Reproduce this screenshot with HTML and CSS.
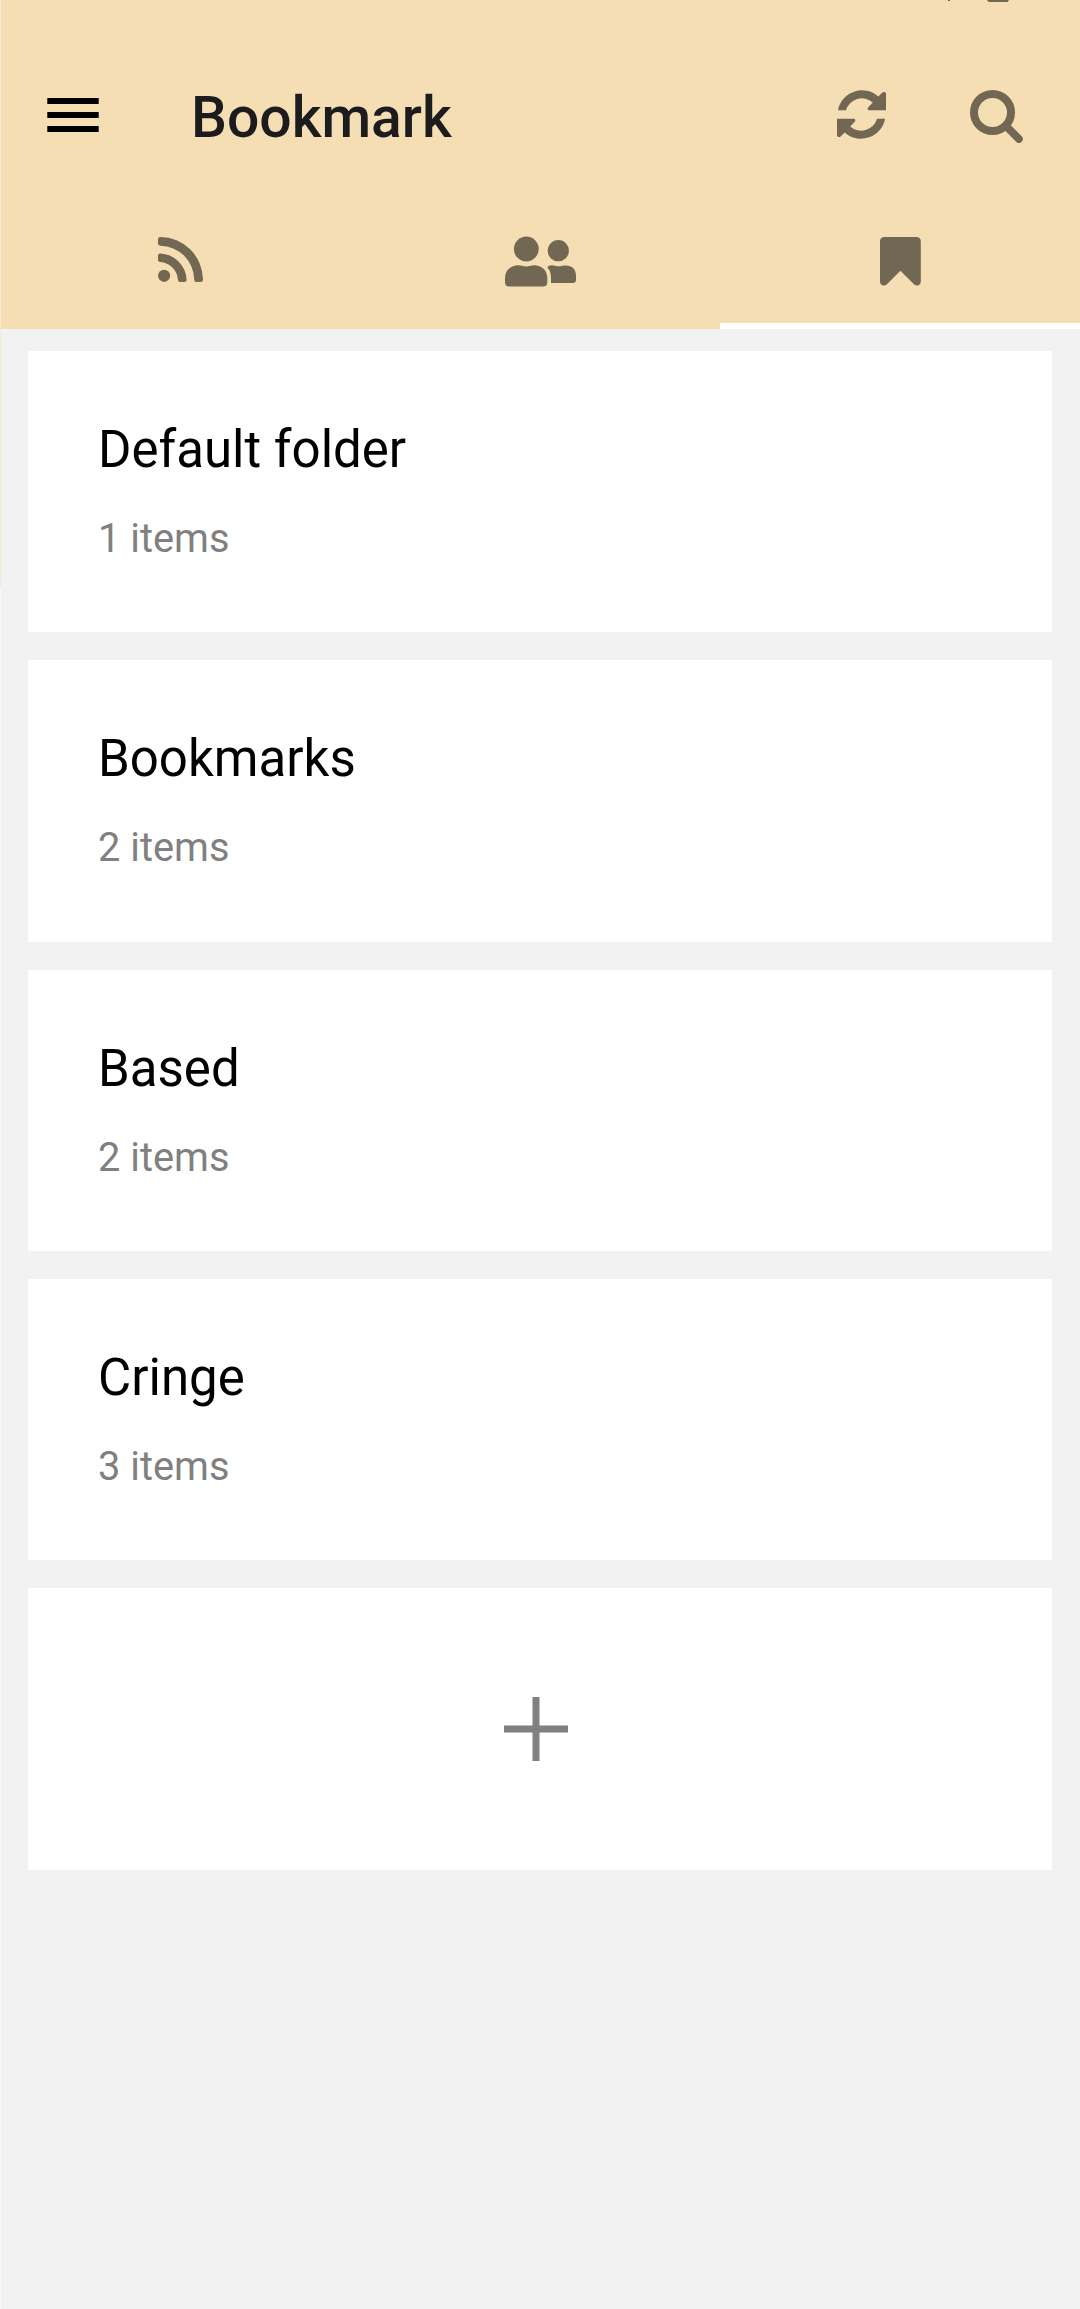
FILE: index.html
```html
<!DOCTYPE html>
<html lang="en">
<head>
<meta charset="utf-8">
<title>Bookmark</title>
<link rel="stylesheet" href="styles.css">
</head>
<body>
<div class="screen">
  <header class="app-header">
    <div class="status-bar">
      <svg width="62" height="2" viewBox="948 0 62 2"><path d="M948 0h2v1h-2zM987 0h22l-1.5 2h-19z"/></svg>
    </div>
    <div class="toolbar">
      <svg class="menu-icon" width="52" height="34" viewBox="0 0 52 34"><path d="M.3 0h51.4v6H.3zM.3 14h51.4v6H.3zM.3 28h51.4v6H.3z"/></svg>
      <h1 class="title">Bookmark</h1>
      <div class="actions">
        <svg width="49" height="49" viewBox="0 0 49 49">
          <path id="sync-half" d="M.9 20.3A24.5 24.5 0 0 1 41.3 6.6L45.4 2.5Q46.4 1.6 47.7 2.1 49 2.6 49 4V20.3H32.1Q30.8 20.2 30.7 18.9 30.6 17.8 31.5 16.9L35.8 12.5A16.4 16.4 0 0 0 9 20.3Z"/>
          <use href="#sync-half" transform="rotate(180 24.5 24.5)"/>
        </svg>
        <svg width="53" height="53" viewBox="0 0 53 53"><circle cx="22.5" cy="22.5" r="18.5" fill="none" stroke="currentColor" stroke-width="8"/><path d="M35.5 35.5L48.9 48.9" stroke="currentColor" stroke-width="7.8" stroke-linecap="round"/></svg>
      </div>
    </div>
    <nav class="tabs">
      <div class="tab">
        <svg class="rss-icon" width="45" height="45" viewBox="0 0 45 45">
          <circle cx="6.1" cy="38.8" r="6.1"/>
          <path d="M0 2.3Q0 0 2.3 0A43 43 0 0 1 45 42.7Q45 45 42.7 45H38.5Q36.4 45 36.2 42.7A34.3 34.3 0 0 0 2.3 8.7Q0 8.5 0 6.5Z"/>
          <path d="M0 18.6Q0 16.3 2.3 16.4A27.5 27.5 0 0 1 28.6 42.7Q28.7 45 26.4 45H22.1Q20.2 45 19.9 42.7A19 19 0 0 0 2.3 25.1Q0 24.8 0 22.9Z"/>
        </svg>
      </div>
      <div class="tab">
        <svg class="people-icon" width="71" height="51" viewBox="505 236 71 51">
          <circle cx="526.3" cy="249" r="12.4"/><circle cx="558.3" cy="250.7" r="10.6"/>
          <path d="M517.5 265.2Q519.8 265 522 265.8Q526.3 267.3 530.6 265.8Q532.8 265 535.1 265.2Q547.3 267 547.3 278.5V282.3Q547.3 286.5 543.1 286.5H509.3Q505 286.5 505 282.3V278.5Q505 267 517.5 265.2Z"/>
          <path d="M547.7 266.4Q551.5 264.6 555 265.8Q558.4 266.8 562 265.8Q576 264 576 276.5V279.7Q576 283 572.6 283H551V278.5Q551 271 547.7 268Z"/>
        </svg>
      </div>
      <div class="tab tab-active">
        <svg class="bookmark-icon" width="41" height="49" viewBox="0 0 41 49"><path d="M4.5 0H36.3Q40.8 0 40.8 4.5V44.4Q40.8 47.3 38.5 48.2Q36.3 49 34 47.2L20.4 33.8 6.9 47.2Q4.6 49 2.3 48.2Q0 47.3 0 44.4V4.5Q0 0 4.5 0Z"/></svg>
      </div>
    </nav>
  </header>
  <main class="folders">
    <article class="card"><h2 class="name">Default folder</h2><p class="count">1 items</p></article>
    <article class="card"><h2 class="name">Bookmarks</h2><p class="count">2 items</p></article>
    <article class="card"><h2 class="name">Based</h2><p class="count">2 items</p></article>
    <article class="card"><h2 class="name">Cringe</h2><p class="count">3 items</p></article>
    <article class="card card-add"><svg width="64" height="64" viewBox="0 0 64 64"><path d="M28.5 0h7v28.5H64v7H35.5V64h-7V35.5H0v-7h28.5z"/></svg></article>
  </main>
  <div class="drawer-edge"></div>
</div>
</body>
</html>
```
FILE: styles.css
```css
* { box-sizing: border-box; }

body {
  margin: 0;
  background: #f2f2f2;
  font-family: Roboto, "Liberation Sans", sans-serif;
}

svg { display: block; fill: currentColor; }

.screen { position: relative; height: 2309px; overflow: hidden; }

.app-header {
  height: 329px;
  background: #f5deb3;
  color: #716753;
}

.status-bar { height: 68px; padding-left: 948px; }

.toolbar {
  display: flex;
  align-items: center;
  height: 94px;
  padding: 0 57px 0 47px;
}

.menu-icon { color: #000; }

.title {
  margin: 5px 0 0 92px;
  color: #1c1c1e;
  font-size: 57px;
  font-weight: 500;
  line-height: 66px;
}

.actions {
  display: flex;
  gap: 84px;
  margin-left: auto;
  padding-top: 3px;
}

.tabs { display: flex; height: 167px; }

.tab {
  display: flex;
  justify-content: center;
  flex: 1;
  padding-top: 75px;
}

.people-icon { margin-top: -1px; }

.tab-active { border-bottom: 6px solid #fff; }

.folders {
  display: flex;
  flex-direction: column;
  gap: 28.125px;
  padding: 21.9px 28px;
}

.card {
  height: 281.25px;
  padding: 69px 70px;
  background: #fff;
}

.name {
  margin: 0;
  color: #000;
  font-size: 51px;
  font-weight: 400;
  line-height: 60px;
}

.count {
  margin: 36px 0 0;
  color: #808080;
  font-size: 39.8px;
  line-height: 46px;
}

.card-add {
  display: flex;
  align-items: center;
  justify-content: center;
  padding: 0 8px 0 0;
  color: #808080;
}

/* Sliver of the closed navigation drawer along the left side */
.drawer-edge {
  position: absolute;
  inset: 0 auto 0 0;
  width: 1px;
  background: linear-gradient(#f8ead0 586px, #f8f8f8 586px);
}
```
